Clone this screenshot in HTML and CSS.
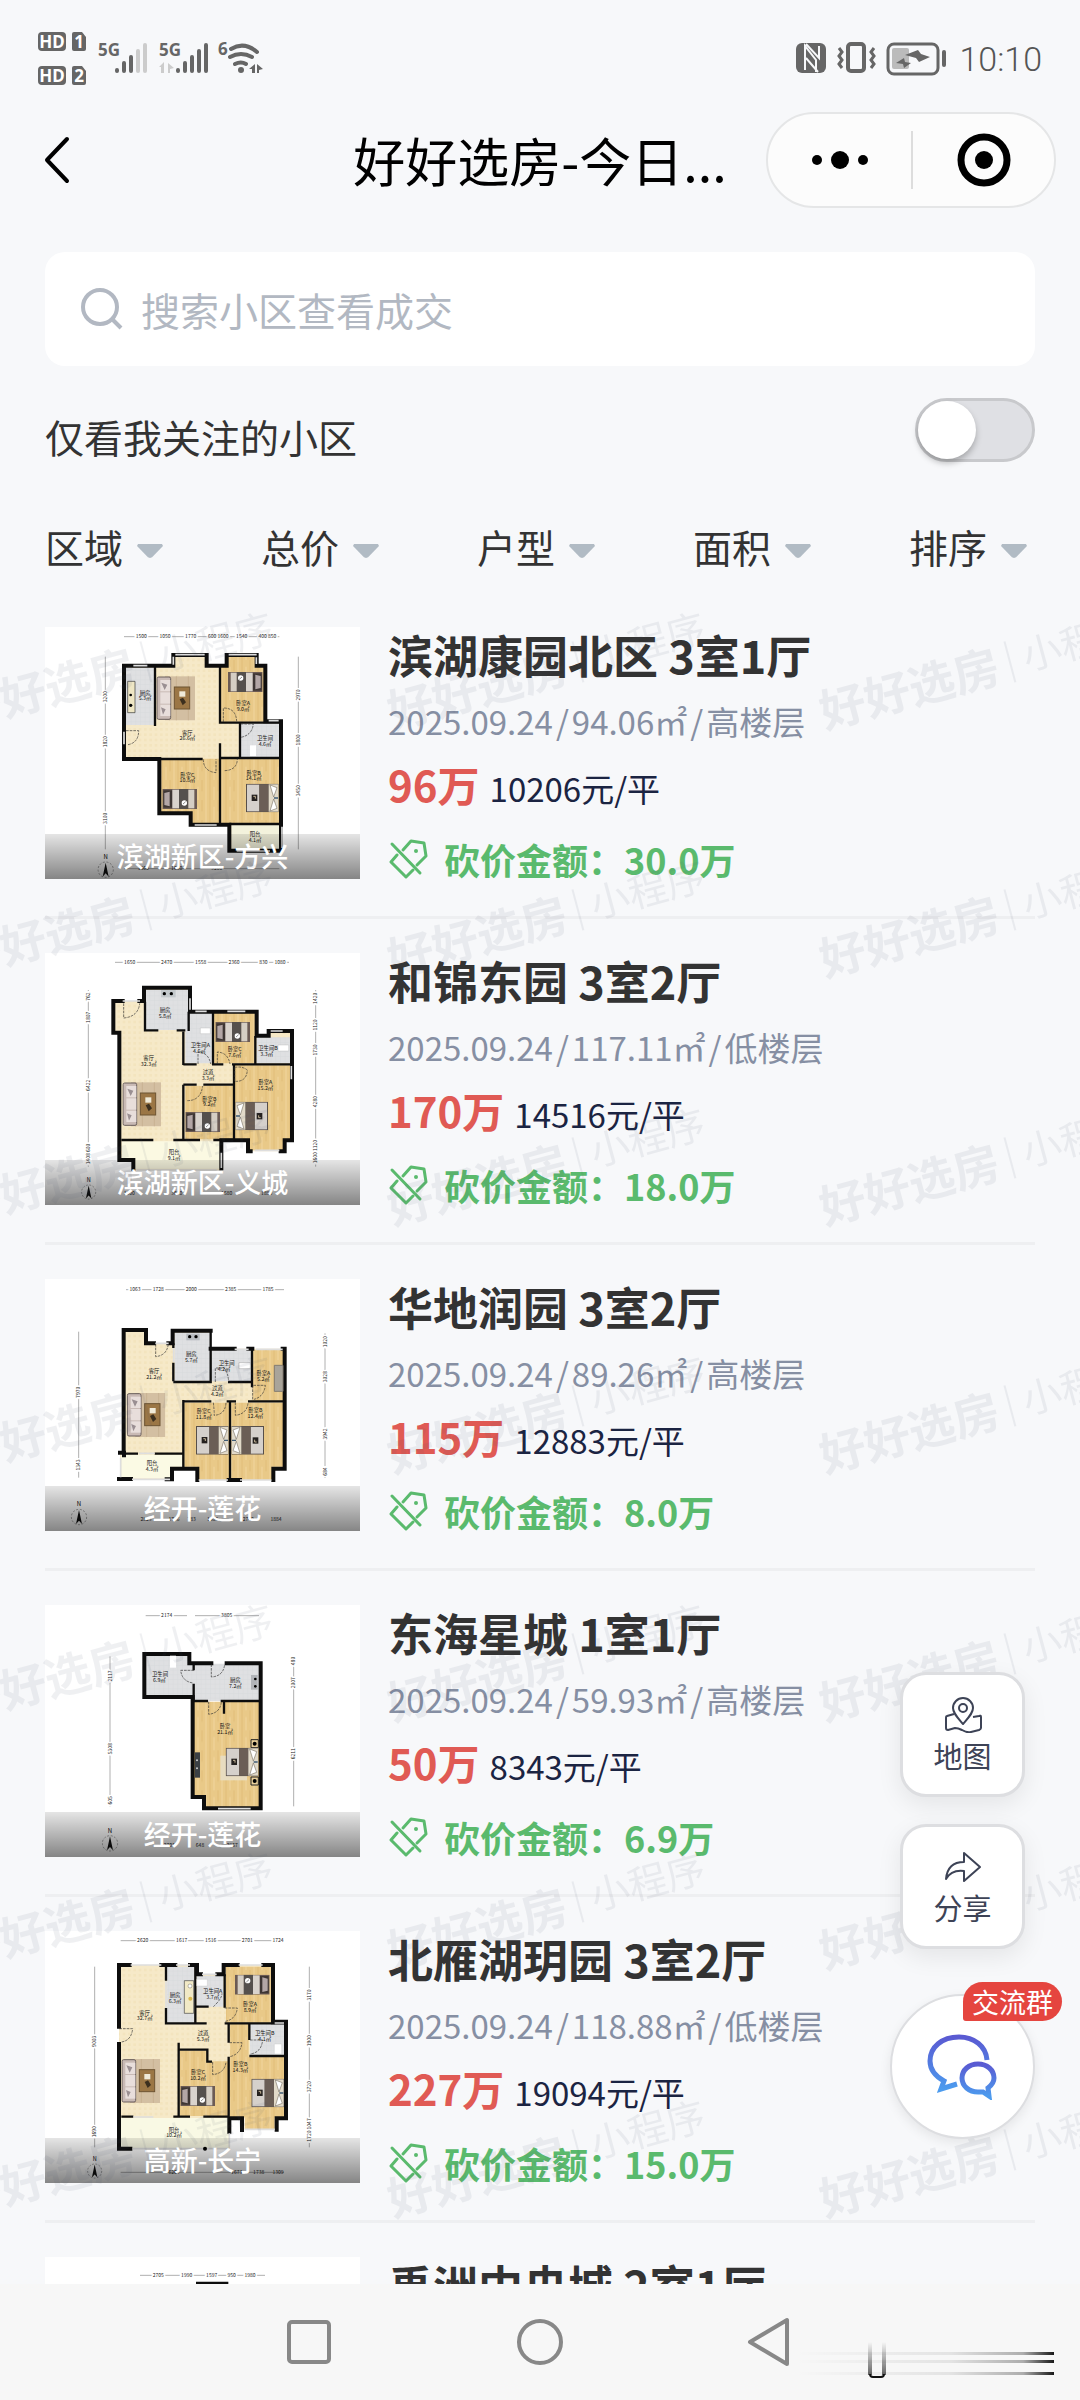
FILE: index.html
```html
<!DOCTYPE html>
<html lang="zh-CN">
<head>
    <meta charset="UTF-8">
    <meta name="viewport" content="width=device-width, initial-scale=1.0">
    <title>好好选房-今日成交</title>
    <link rel="stylesheet" href="styles.css">
</head>
<body>
    <!-- shared symbols for the floor plans and cards -->
    <svg class="sprite" aria-hidden="true">
        <defs>
            <pattern id="wood" width="48" height="60" patternUnits="userSpaceOnUse">
                <rect width="48" height="60" fill="#e9c988"/>
                <path d="M6 0v60M30 0v34" stroke="#e2be79" stroke-width="3"/>
                <path d="M18 20v40M42 0v60" stroke="#efd398" stroke-width="4"/>
            </pattern>
            <pattern id="tile" width="16" height="16" patternUnits="userSpaceOnUse">
                <rect width="16" height="16" fill="#f6e9c8"/>
                <path d="M0 0h8v8H0z" fill="#f3e4be"/>
            </pattern>
            <pattern id="grey" width="14" height="14" patternUnits="userSpaceOnUse">
                <rect width="14" height="14" fill="#dfe0e2"/>
                <path d="M0 0h14M0 0v14" stroke="#d6d8da" stroke-width="2"/>
            </pattern>
            <linearGradient id="chatBlue" x1="0" y1="0" x2="0" y2="1">
                <stop offset="0" stop-color="#5a5ad2"/>
                <stop offset="1" stop-color="#4c9bee"/>
            </linearGradient>
        </defs>
        <symbol id="bed-small" viewBox="0 0 104 60">
            <rect width="104" height="60" fill="#6b5a54"/>
            <rect x="3" y="4" width="27" height="52" fill="#3e3634"/>
            <path d="M6 12l16-4v44l-16-4z" fill="#b3a6a6"/>
            <rect x="30" y="2" width="20" height="56" fill="#d9d3cd"/>
            <rect x="50" width="28" height="60" fill="#55504d"/>
            <rect x="78" y="2" width="18" height="56" fill="#d5cec4"/>
            <circle cx="66" cy="42" r="8" fill="#fff"/>
            <path d="M62 45l8-7" stroke="#555" stroke-width="2"/>
        </symbol>
        <symbol id="bed-large" viewBox="0 0 98 86">
            <rect width="98" height="86" fill="#574f4a"/>
            <rect x="3" y="3" width="37" height="80" fill="#d5d0cb"/>
            <rect x="40" y="2" width="28" height="82" fill="#6b5e56"/>
            <rect x="68" y="2" width="29" height="82" fill="#e2dac9"/>
            <path d="M72 4l21 8-10 28zM72 82l21-8-10-28z" fill="#fff" stroke="#81786d" stroke-width="2"/>
            <rect x="17" y="33" width="17" height="19" fill="#25211f"/>
            <path d="M22 38h6v7" stroke="#c8b899" stroke-width="3" fill="none"/>
            <path d="M84 43h12" stroke="#3f5b75" stroke-width="4"/>
        </symbol>
        <symbol id="sofa" viewBox="0 0 116 134">
            <rect x="26" y="1" width="90" height="132" fill="#d3bfa2"/>
            <path d="M40 1v132M60 1v132M96 1v132" stroke="#c8b293" stroke-width="3"/>
            <rect x="2" y="3" width="41" height="127" rx="5" fill="#c9bab5" stroke="#6a5f5d" stroke-width="3"/>
            <rect x="12" y="12" width="30" height="34" fill="#e8dedb"/>
            <rect x="12" y="49" width="30" height="34" fill="#e8dedb"/>
            <rect x="12" y="86" width="30" height="34" fill="#e8dedb"/>
            <path d="M15 20l18 6-8 16zM14 94l14 6-8 16z" fill="#9a8f92"/>
            <rect x="54" y="33" width="46" height="66" fill="#9b7645" stroke="#6d5433" stroke-width="3"/>
            <rect x="69" y="46" width="18" height="16" fill="#f0ead8"/>
            <path d="M70 70l10-5 9 14-10 9z" fill="#3c2f1e"/>
        </symbol>
        <symbol id="compass" viewBox="0 0 50 76">
            <text x="25" y="17" font-size="18" text-anchor="middle">N</text>
            <circle cx="25" cy="49" r="23" fill="none" stroke="#777" stroke-width="2" stroke-dasharray="6 5"/>
            <path d="M25 28l9 42-9-10-9 10z" fill="#111"/>
        </symbol>
        <symbol id="cut" viewBox="0 0 40 40">
            <g fill="none" stroke="#5aba6d" stroke-width="3" stroke-linejoin="round" stroke-linecap="round">
                <path d="M4 5l28 29"/>
                <path d="M15 11l8-9 13 2 2 13-9 9"/>
                <path d="M9 16l-6 7 15 15 7-7"/>
            </g>
            <circle cx="28" cy="12" r="2" fill="#5aba6d"/>
        </symbol>
    </svg>

    <div class="page">
        <div class="status-bar">
            <svg class="status-left" viewBox="36 28 230 60" aria-hidden="true">
                <g fill="#666">
                    <rect x="38" y="32" width="28" height="19" rx="4"/>
                    <path d="M74 32h8l4 5v12q0 2-2 2H74q-2 0-2-2V34q0-2 2-2z"/>
                    <rect x="38" y="66" width="28" height="19" rx="4"/>
                    <path d="M74 66h8l4 5v12q0 2-2 2H74q-2 0-2-2V68q0-2 2-2z"/>
                </g>
                <g class="narrow" fill="#fff" font-size="17" text-anchor="middle">
                    <text x="52" y="48">HD</text>
                    <text x="79" y="48">1</text>
                    <text x="52" y="82">HD</text>
                    <text x="79" y="82">2</text>
                </g>
                <g class="narrow" fill="#666" font-size="17">
                    <text x="98" y="56">5G</text>
                    <text x="159" y="56">5G</text>
                    <text x="218" y="55">6</text>
                </g>
                <g stroke="#666" stroke-width="4" stroke-linecap="round">
                    <path d="M117 71v-1M124 71v-8M131 71V57M178 71v-1M185 71v-8M192 71V57M199 71V51M206 71V45"/>
                    <path d="M138 71V51M145 71V45" stroke="#ccc"/>
                </g>
                <path d="M159 67l5-5v11h-3v-6zM168 63l6 5-4 1v4h-2z" fill="#ccc"/>
                <g fill="none" stroke="#666" stroke-width="4" stroke-linecap="round">
                    <path d="M231 49q13-8 26 3M230 57q11-6 22 0M235 64q6-3 11 0"/>
                </g>
                <circle cx="241" cy="70" r="3" fill="#666"/>
                <path d="M249 69l6-5v9h-3v-4zM257 64l6 5-4 1v3h-2z" fill="#666"/>
            </svg>
            <div class="status-right">
                <svg class="status-icons" viewBox="794 40 152 36" aria-hidden="true">
                    <rect x="795" y="43" width="30" height="30" rx="6" fill="#666"/>
                    <path d="M804 70V46l11 14v12M805 44l13 14V46M805 58l12 14" fill="none" stroke="#f7f8fa" stroke-width="2"/>
                    <g fill="none" stroke="#666">
                        <rect x="847" y="44" width="16" height="27" rx="3" stroke-width="4"/>
                        <path d="M838 48l3 4-3 4 3 4-3 4 3 4M873 48l-3 4 3 4-3 4 3 4-3 4" stroke-width="3"/>
                        <rect x="887" y="44" width="50" height="30" rx="6" stroke-width="3"/>
                        <path d="M943 52v13" stroke-width="4" stroke-linecap="round"/>
                    </g>
                    <rect x="891" y="48" width="17" height="21" rx="2" fill="#bbb"/>
                    <path d="M904 55l13-5 3 4 9 3-11 5-3-4zM895 63l8-5 1 4 6 1-7 5-1-4z" fill="#666"/>
                </svg>
                <span class="clock">10:10</span>
            </div>
        </div>

        <header class="title-bar">
            <button class="back" aria-label="返回">
                <svg viewBox="0 0 26 48"><path d="M23 3L3 24l20 21" fill="none" stroke="#000" stroke-width="4" stroke-linecap="round" stroke-linejoin="round"/></svg>
            </button>
            <h1>好好选房-今日...</h1>
            <div class="capsule">
                <button aria-label="更多">
                    <svg viewBox="0 0 60 60"><circle cx="7" cy="30" r="5"/><circle cx="30" cy="30" r="9"/><circle cx="53" cy="30" r="5"/></svg>
                </button>
                <button aria-label="关闭">
                    <svg viewBox="0 0 60 60"><circle cx="30" cy="30" r="23" fill="none" stroke="#000" stroke-width="7"/><circle cx="30" cy="30" r="9"/></svg>
                </button>
            </div>
        </header>

        <label class="search-box">
            <svg viewBox="0 0 42 42" aria-hidden="true"><circle cx="19" cy="19" r="17" fill="none" stroke="#b2b8c2" stroke-width="4"/><path d="M31 31l9 9" stroke="#b2b8c2" stroke-width="4"/></svg>
            <input type="text" placeholder="搜索小区查看成交" aria-label="搜索小区">
        </label>

        <div class="follow-row">
            <label for="follow">仅看我关注的小区</label>
            <input class="switch" id="follow" type="checkbox">
        </div>

        <div class="filters">
            <button>区域<i class="caret"></i></button>
            <button>总价<i class="caret"></i></button>
            <button>户型<i class="caret"></i></button>
            <button>面积<i class="caret"></i></button>
            <button>排序<i class="caret"></i></button>
        </div>

        <main class="list">
            <article class="card">
                <div class="plan">
                    <svg viewBox="135 81 945 756" aria-hidden="true">
                        <path d="M372 197h148v-32h100v32h60v-32h90v32h26v167h47v388H688v-78H572v-34h-94V477H372z" fill="url(#tile)"/>
                        <path d="M663 200h135v165H663zM484 476h176v196h-88v-34h-88zM663 476h180v196H663z" fill="url(#wood)"/>
                        <path d="M682 168h88v34h-88z" fill="url(#wood)"/>
                        <path d="M378 203h85v172h-85zM721 370h120v102H721z" fill="url(#grey)"/>
                        <path d="M694 674h148v74H694z" fill="#f3f2dc"/>
                        <path d="M372 197h148v-32h100v32h60v-32h90v32h26v167h47v388H688v-78H572v-34h-94V477H372z" class="wall"/>
                        <path d="M465 200v178M660 200v168h60v104M378 477h230M660 430v242M660 474h180M720 368h120M688 672h150" class="wall-thin"/>
                        <path d="M526 164h88M686 164h84M520 170v24M769 172v20M584 675h66M846 680v64M710 753h100M400 197h42M372 395v38M806 362h30" class="window"/>
                        <path d="M378 392h38q0 36-32 42M670 366v-42q38 0 40 40M722 372h38q-4 34-38 40M610 478q0 36 38 40v-40M674 512q38-2 38-36" class="door"/>
                        <path d="M383 244h22v94h-22z" fill="#eee6c4" stroke="#333" stroke-width="2"/>
                        <circle cx="392" cy="316" r="5"/><circle cx="392" cy="285" r="4"/><path d="M750 436h18v32h-18z" fill="#fff"/>
                        <use href="#sofa" x="469" y="228" width="116" height="134"/>
                        <use href="#bed-small" transform="translate(788 276) rotate(180)" width="104" height="60"/>
                        <use href="#bed-small" x="487" y="567" width="104" height="60"/>
                        <use href="#bed-large" x="738" y="551" width="98" height="86"/>
                        <g class="room">
                            <text x="435" y="284">厨房</text><text x="435" y="301">5.3㎡</text>
                            <text x="562" y="404">客厅</text><text x="562" y="421">26.6㎡</text>
                            <text x="729" y="316">卧室A</text><text x="729" y="333">9.0㎡</text>
                            <text x="795" y="420">卫生间</text><text x="795" y="437">4.6㎡</text>
                            <text x="562" y="530">卧室C</text><text x="562" y="547">10.8㎡</text>
                            <text x="761" y="524">卧室B</text><text x="761" y="541">14.1㎡</text>
                            <text x="765" y="709">阳台</text><text x="765" y="726">4.1㎡</text>
                        </g>
                        <path d="M372 110h466M316 170v578M895 170v578M372 806h466" class="dim"/>
                        <g class="size">
                            <text x="424" y="115">1500</text><text x="495" y="115">1050</text><text x="572" y="115">1770</text><text x="655" y="115">600 1600</text><text x="725" y="115">1540</text><text x="802" y="115">400 850</text>
                            <text transform="translate(321 290) rotate(-90)">3200</text><text transform="translate(321 425) rotate(-90)">1820</text><text transform="translate(321 655) rotate(-90)">3100</text>
                            <text transform="translate(900 285) rotate(-90)">2970</text><text transform="translate(900 420) rotate(-90)">1800</text><text transform="translate(900 572) rotate(-90)">3450</text>
                        </g>
                        <g class="size low">
                            <text x="430" y="811">1860</text><text x="530" y="811">1650</text><text x="650" y="811">3200</text>
                        </g>
                        <use href="#compass" x="292" y="760" width="50" height="76"/>
                    </svg>
                    <span class="area-name">滨湖新区-方兴</span>
                </div>
                <div class="info">
                    <h2>滨湖康园北区 3室1厅</h2>
                    <p class="meta"><span>2025.09.24</span><span>/</span><span>94.06㎡</span><span>/</span><span>高楼层</span></p>
                    <p class="price"><strong>96万</strong><span>10206元/平</span></p>
                    <p class="bargain"><svg><use href="#cut"/></svg><span>砍价金额：30.0万</span></p>
                </div>
            </article>

            <article class="card">
                <div class="plan">
                    <svg viewBox="135 69 945 756" aria-hidden="true">
                        <path d="M340 213h92v-40h138v72h200v72h36v-14h70v328h-20v33H745v-33h-82v90H400v-26h-40V308h-20z" fill="url(#tile)"/>
                        <path d="M438 180h128v120H438zM556 248h80v152h-80zM770 322h104v78H770z" fill="url(#grey)"/>
                        <path d="M642 248h124v152H642zM556 468h144v160H556zM705 406h168v222h-22v32H750v-32h-45z" fill="url(#wood)"/>
                        <path d="M664 637h80v30h-80z" fill="#fff"/>
                        <path d="M366 634h294v82H404v-26h-38z" fill="#fbf9e2"/>
                        <path d="M400 716v-26h-42V308h-18v-95h28M418 213h14v-40h138v72h200v72h36v-14h70v328h-22v33h-12M752 664h-8v-33h-80v84" class="wall"/>
                        <path d="M435 215v86h40M530 301h26M550 305v100M566 245v58M639 248v156M766 318v84M550 403h40M636 403h34M696 403h180M550 464h40M610 464h92v168M550 464v166M364 630h96M520 630h80M640 630h60M702 405v60" class="wall-thin"/>
                        <path d="M368 213h52M682 244h54M586 244h34M764 661h74M664 668v46M874 408v40M812 303h36M410 720h240M570 205v34" class="window"/>
                        <path d="M371 220v44q44-4 48-44M594 402v-36q32 2 38 36M652 402v-36q32 2 38 36M704 412v42q36 2 38-34-16-12-36-8M562 512q40 0 46-44" class="door"/>
                        <path d="M483 180h44v22h-44z" fill="#c3c8cb"/><circle cx="493" cy="191" r="5"/><circle cx="514" cy="191" r="5"/>
                        <path d="M601 294h30v17h-30zM834 345h32v18h-32z" fill="#fff" stroke="#aaa"/>
                        <use href="#sofa" x="367" y="456" width="116" height="134"/>
                        <use href="#bed-small" x="646" y="276" width="104" height="60"/>
                        <use href="#bed-small" x="556" y="546" width="104" height="60"/>
                        <use href="#bed-large" transform="translate(804 601) rotate(180)" width="98" height="86"/>
                        <g class="room">
                            <text x="495" y="247">厨房</text><text x="495" y="264">5.8㎡</text>
                            <text x="446" y="391">客厅</text><text x="446" y="408">32.3㎡</text>
                            <text x="601" y="351">卫生间A</text><text x="598" y="368">4.6㎡</text>
                            <text x="704" y="364">卧室C</text><text x="704" y="381">7.6㎡</text>
                            <text x="804" y="361">卫生间B</text><text x="800" y="378">3.3㎡</text>
                            <text x="624" y="432">过道</text><text x="624" y="449">3.3㎡</text>
                            <text x="628" y="512">卧室B</text><text x="628" y="529">9.2㎡</text>
                            <text x="796" y="463">卧室A</text><text x="796" y="480">15.2㎡</text>
                            <text x="522" y="673">阳台</text><text x="522" y="690">9.1㎡</text>
                        </g>
                        <path d="M345 97h522M265 180v530M947 180v530" class="dim"/>
                        <g class="size">
                            <text x="389" y="102">1650</text><text x="500" y="102">2470</text><text x="602" y="102">1558</text><text x="702" y="102">2360</text><text x="790" y="102">830</text><text x="840" y="102">1080</text>
                            <text transform="translate(270 200) rotate(-90)">762</text><text transform="translate(270 262) rotate(-90)">1807</text><text transform="translate(270 466) rotate(-90)">6422</text><text transform="translate(270 672) rotate(-90)">1408 600</text>
                            <text transform="translate(952 205) rotate(-90)">1420</text><text transform="translate(952 285) rotate(-90)">1120</text><text transform="translate(952 360) rotate(-90)">1730</text><text transform="translate(952 515) rotate(-90)">4280</text><text transform="translate(952 665) rotate(-90)">1600 1120</text>
                        </g>
                        <g class="size low">
                            <text x="388" y="796">1400</text><text x="530" y="796">3680</text><text x="680" y="796">1580</text><text x="800" y="796">1890</text>
                        </g>
                        <use href="#compass" x="241" y="741" width="50" height="70"/>
                    </svg>
                    <span class="area-name">滨湖新区-义城</span>
                </div>
                <div class="info">
                    <h2>和锦东园 3室2厅</h2>
                    <p class="meta"><span>2025.09.24</span><span>/</span><span>117.11㎡</span><span>/</span><span>低楼层</span></p>
                    <p class="price"><strong>170万</strong><span>14516元/平</span></p>
                    <p class="bargain"><svg><use href="#cut"/></svg><span>砍价金额：18.0万</span></p>
                </div>
            </article>

            <article class="card">
                <div class="plan">
                    <svg viewBox="135 57 945 756" aria-hidden="true">
                        <path d="M371 210h67v40h80v-38h114v54h222v360h-34v34H588v-34h-72v30H360v-76h11z" fill="url(#tile)"/>
                        <path d="M524 218h108v144H524zM634 270h120v94H634z" fill="url(#grey)"/>
                        <path d="M758 270h92v152h-92zM553 428h136v232h-98v-40h-38zM694 428h156v192h-34v40H694z" fill="url(#wood)"/>
                        <path d="M364 584h184v36h-36v34H364z" fill="#fbfae4"/>
                        <path d="M371 578V210h67v40h24M505 250h13v-38h114M632 266h72M745 266h12M848 266h6v360h-34v34M592 660v-34h-76v32h-16M393 657h-36M360 578h12v8M686 660h34" class="wall"/>
                        <path d="M632 216v150h-112M520 250v14M520 308v56M756 266v116M684 366h72M550 420v206M550 424h84M680 424h28M744 424h110M690 424v236M372 581h42M464 581h86" class="wall-thin"/>
                        <path d="M466 250h40M704 268h42M768 268h80M362 594v58M396 658h114M596 660h88M720 660h94M521 264v42M416 580h48" class="window"/>
                        <path d="M467 252v38q34-4 38-38M646 366v-42h26q12 12 14 42M640 428q4 34 2 38 34-2 36-38M706 428v38q34-4 38-36M758 418v-42h38q-4 34-34 42" class="door"/>
                        <path d="M559 221h40v20h-40z" fill="#b9bdc2"/><circle cx="569" cy="230" r="5"/><circle cx="588" cy="230" r="5"/>
                        <path d="M717 308h34v18h-34z" fill="#fff" stroke="#777"/>
                        <path d="M823 316h26v78h-26z" fill="#a9a49a" stroke="#827b70" stroke-width="3"/>
                        <use href="#sofa" x="380" y="398" width="116" height="134"/>
                        <use href="#bed-large" x="588" y="498" width="98" height="86"/>
                        <use href="#bed-large" transform="translate(792 584) rotate(180)" width="98" height="86"/>
                        <g class="room">
                            <text x="574" y="289">厨房</text><text x="574" y="306">5.7㎡</text>
                            <text x="462" y="340">客厅</text><text x="462" y="357">21.2㎡</text>
                            <text x="680" y="315">卫生间</text><text x="672" y="332">4.2㎡</text>
                            <text x="790" y="345">卧室A</text><text x="790" y="362">5.2㎡</text>
                            <text x="652" y="391">过道</text><text x="652" y="408">4.2㎡</text>
                            <text x="611" y="459">卧室C</text><text x="611" y="476">11.8㎡</text>
                            <text x="766" y="456">卧室B</text><text x="766" y="473">12.4㎡</text>
                            <text x="456" y="615">阳台</text><text x="456" y="632">4.3㎡</text>
                        </g>
                        <path d="M378 89h474M236 215v438M975 220v434" class="dim"/>
                        <g class="size">
                            <text x="405" y="94">1063</text><text x="475" y="94">1728</text><text x="574" y="94">2000</text><text x="692" y="94">2385</text><text x="804" y="94">1785</text>
                            <text transform="translate(241 397) rotate(-90)">7970</text><text transform="translate(241 615) rotate(-90)">1343</text>
                            <text transform="translate(980 245) rotate(-90)">1020</text><text transform="translate(980 350) rotate(-90)">3028</text><text transform="translate(980 522) rotate(-90)">3942</text><text transform="translate(980 635) rotate(-90)">684</text>
                        </g>
                        <g class="size low">
                            <text x="438" y="782">2823</text><text x="522" y="782">1746</text><text x="575" y="782">783</text><text x="638" y="782">1685</text><text x="745" y="782">2740</text><text x="828" y="782">1884</text>
                        </g>
                        <use href="#compass" x="211" y="722" width="52" height="76"/>
                    </svg>
                    <span class="area-name">经开-莲花</span>
                </div>
                <div class="info">
                    <h2>华地润园 3室2厅</h2>
                    <p class="meta"><span>2025.09.24</span><span>/</span><span>89.26㎡</span><span>/</span><span>高楼层</span></p>
                    <p class="price"><strong>115万</strong><span>12883元/平</span></p>
                    <p class="bargain"><svg><use href="#cut"/></svg><span>砍价金额：8.0万</span></p>
                </div>
            </article>

            <article class="card">
                <div class="plan">
                    <svg viewBox="135 44 945 756" aria-hidden="true">
                        <path d="M432 192h136v28h214v112H578v-10H432z" fill="url(#grey)"/>
                        <path d="M582 334h200v318H612v-34h-30z" fill="url(#wood)"/>
                        <path d="M634 219h-66v-28H433v129h145v300h34v34h170V219H680" class="wall"/>
                        <path d="M581 224v16M581 280v50M580 332h44M662 332h120M672 334v36" class="wall-thin"/>
                        <path d="M654 655h98" class="window"/>
                        <path d="M582 240h-40q4 34 38 38M634 222v38q36-2 40-38M626 334v38q34-4 38-36" class="door"/>
                        <path d="M510 196h18v36h-18z" fill="#fff"/>
                        <path d="M753 254h20v44h-20z" fill="#b1b4b8"/><circle cx="766" cy="266" r="4"/><circle cx="766" cy="288" r="4"/>
                        <path d="M661 496h80v74h-80z" fill="#e8dcc0"/>
                        <path d="M585 486h15v76h-15z" fill="#3b4045"/><circle cx="591" cy="510" r="3" fill="#ccc"/><circle cx="591" cy="534" r="3" fill="#ccc"/>
                        <path d="M753 448h22v24h-22zM753 560h22v24h-22z" fill="#e9cf9a" stroke="#222" stroke-width="3"/>
                        <circle cx="764" cy="460" r="6"/><circle cx="764" cy="572" r="6"/>
                        <use href="#bed-large" x="677" y="472" width="98" height="86"/>
                        <g class="room">
                            <text x="480" y="257">卫生间</text><text x="478" y="274">6.9㎡</text>
                            <text x="706" y="275">厨房</text><text x="706" y="292">7.2㎡</text>
                            <text x="675" y="413">卧室</text><text x="675" y="430">21.1㎡</text>
                        </g>
                        <path d="M437 76h124M585 76h192M330 198v450M881 198v450" class="dim"/>
                        <g class="size">
                            <text x="500" y="81">2174</text><text x="680" y="81">3805</text>
                            <text transform="translate(335 257) rotate(-90)">2117</text><text transform="translate(335 475) rotate(-90)">5308</text><text transform="translate(335 630) rotate(-90)">605</text>
                            <text transform="translate(886 212) rotate(-90)">480</text><text transform="translate(886 277) rotate(-90)">2007</text><text transform="translate(886 490) rotate(-90)">6211</text>
                        </g>
                        <g class="size low">
                            <text x="508" y="770">2703</text><text x="600" y="770">648</text><text x="697" y="770">2957</text>
                        </g>
                        <use href="#compass" x="305" y="710" width="50" height="76"/>
                    </svg>
                    <span class="area-name">经开-莲花</span>
                </div>
                <div class="info">
                    <h2>东海星城 1室1厅</h2>
                    <p class="meta"><span>2025.09.24</span><span>/</span><span>59.93㎡</span><span>/</span><span>高楼层</span></p>
                    <p class="price"><strong>50万</strong><span>8343元/平</span></p>
                    <p class="bargain"><svg><use href="#cut"/></svg><span>砍价金额：6.9万</span></p>
                </div>
            </article>

            <article class="card">
                <div class="plan">
                    <svg viewBox="135 63 945 756" aria-hidden="true">
                        <path d="M357 165h234v28h80v-28h148v170h38v290H690v90H357z" fill="url(#tile)"/>
                        <path d="M501 170h82v168h-82zM590 198h80v92h-80zM750 342h102v94H750z" fill="url(#grey)"/>
                        <path d="M678 170h136v168H678zM540 422h84v32h60v164H540zM690 342h56v98h106v182h-28v36h-90v-36h-44z" fill="url(#wood)"/>
                        <path d="M362 624h324v90H362z" fill="#f9f9e4"/>
                        <path d="M357 350V165h32M357 402v314h34M484 165h42M570 165h21v28h12M652 193h19v-28h42M790 165h29v172M819 335h39v290h-28v34M726 660v-35h-38v40" class="wall"/>
                        <path d="M498 168v44M498 294v46h122M586 168v170M586 290h40M674 193v100M674 340h180M686 340v58M686 440v180M748 340v50M748 438h106M536 398v222M536 419h86v36h14M364 620h36M520 620h50M610 620h78" class="wall-thin"/>
                        <path d="M392 165h92M528 165h42M606 193h44M716 165h72M400 621h60M398 716h290M734 658h90M688 670v42M498 214v80M824 339h28" class="window"/>
                        <circle cx="615" cy="716" r="6"/>
                        <path d="M358 356h40q-4 36-34 40M640 290q26-24 26-40M674 294h38q-4 34-36 40M688 398h38q-4 34-36 42M750 390h38q-4 38-38 42M638 456v38q36-4 40-38" class="door"/>
                        <path d="M553 212h28v98h-28z" fill="#f1e9c6" stroke="#444" stroke-width="2"/><circle cx="570" cy="228" r="6" fill="#fff" stroke="#333"/><circle cx="571" cy="266" r="6" fill="#d9b84e"/>
                        <path d="M590 208h32v20h-32zM823 402h22v30h-22z" fill="#fff" stroke="#bbb"/>
                        <use href="#sofa" x="364" y="446" width="116" height="134"/>
                        <use href="#bed-small" transform="translate(809 254) rotate(180)" width="104" height="60"/>
                        <use href="#bed-small" x="541" y="528" width="104" height="60"/>
                        <use href="#bed-large" x="754" y="506" width="98" height="86"/>
                        <g class="room">
                            <text x="525" y="261">厨房</text><text x="525" y="278">6.3㎡</text>
                            <text x="434" y="314">客厅</text><text x="434" y="331">32.7㎡</text>
                            <text x="638" y="250">卫生间A</text><text x="638" y="267">3.7㎡</text>
                            <text x="750" y="288">卧室A</text><text x="750" y="305">8.9㎡</text>
                            <text x="609" y="376">过道</text><text x="609" y="393">5.3㎡</text>
                            <text x="794" y="376">卫生间B</text><text x="794" y="393">4.1㎡</text>
                            <text x="594" y="493">卧室C</text><text x="594" y="510">10.2㎡</text>
                            <text x="721" y="468">卧室B</text><text x="721" y="485">14.3㎡</text>
                            <text x="522" y="665">阳台</text><text x="522" y="682">10.2㎡</text>
                        </g>
                        <path d="M362 92h490M284 170v542M928 170v542M362 787h490" class="dim"/>
                        <g class="size">
                            <text x="428" y="97">2620</text><text x="545" y="97">1617</text><text x="632" y="97">1516</text><text x="742" y="97">2701</text><text x="834" y="97">1724</text>
                            <text transform="translate(289 394) rotate(-90)">9003</text><text transform="translate(289 665) rotate(-90)">1690</text>
                            <text transform="translate(933 255) rotate(-90)">3170</text><text transform="translate(933 392) rotate(-90)">1900</text><text transform="translate(933 530) rotate(-90)">3720</text><text transform="translate(933 660) rotate(-90)">1720 1047</text>
                        </g>
                        <g class="size low">
                            <text x="522" y="792">6204</text><text x="710" y="792">1673</text><text x="776" y="792">1738</text><text x="834" y="792">1309</text>
                        </g>
                        <use href="#compass" x="259" y="738" width="50" height="70"/>
                    </svg>
                    <span class="area-name">高新-长宁</span>
                </div>
                <div class="info">
                    <h2>北雁湖玥园 3室2厅</h2>
                    <p class="meta"><span>2025.09.24</span><span>/</span><span>118.88㎡</span><span>/</span><span>低楼层</span></p>
                    <p class="price"><strong>227万</strong><span>19094元/平</span></p>
                    <p class="bargain"><svg><use href="#cut"/></svg><span>砍价金额：15.0万</span></p>
                </div>
            </article>

            <article class="card">
                <div class="plan">
                    <svg viewBox="0 0 945 756" aria-hidden="true">
                        <path d="M285 55h375" class="dim"/>
                        <g class="size">
                            <text x="340" y="60">2705</text><text x="425" y="60">1990</text><text x="500" y="60">1597</text><text x="560" y="60">950</text><text x="615" y="60">1980</text>
                        </g>
                        <path d="M459 80h85v240h-85z" fill="url(#tile)" class="wall"/>
                    </svg>
                </div>
                <div class="info">
                    <h2>禹洲中央城 2室1厅</h2>
                </div>
            </article>

            <svg class="watermark" aria-hidden="true">
                <defs>
                    <pattern id="mark" x="-57" y="2" width="432" height="248" patternUnits="userSpaceOnUse">
                        <g transform="translate(18 134) rotate(-15)" fill="#46506a">
                            <text font-size="46" font-weight="700">好好选房</text>
                            <text x="210" y="-4" font-size="39">小程序</text>
                            <path d="M196 -38v42" stroke="#46506a" stroke-width="2"/>
                        </g>
                    </pattern>
                </defs>
                <rect width="100%" height="100%" fill="url(#mark)"/>
            </svg>

            <div class="float-menu">
                <button class="float-btn">
                    <svg viewBox="0 0 40 36" aria-hidden="true">
                        <g fill="none" stroke="#3d4356" stroke-width="2" stroke-linejoin="round">
                            <path d="M20 27c-6-7-10-11-10-16a10 10 0 0 1 20 0c0 5-4 9-10 16z"/>
                            <circle cx="20" cy="11" r="4"/>
                            <path d="M11 17l-7 2q-1 0-1 2v10q0 2 2 2l7-2q3 0 7 2 5 3 9 2l8-2q2-1 2-2V20q0-2-2-1l-6 1"/>
                        </g>
                    </svg>
                    地图
                </button>
                <button class="float-btn">
                    <svg viewBox="0 0 40 36" aria-hidden="true"><path d="M21 4l16 14-16 14V22C13 21 7 23 3 30 4 19 10 13 21 13z" fill="none" stroke="#3d4356" stroke-width="2" stroke-linejoin="round"/></svg>
                    分享
                </button>
                <button class="chat-btn" aria-label="交流群">
                    <svg viewBox="0 0 72 66" aria-hidden="true">
                        <g fill="none" stroke="url(#chatBlue)" stroke-width="5">
                            <path d="M60 26C59 12 47 3 32 3 15 3 3 13 3 27c0 9 5 15 14 20l-3 8 16-5"/>
                            <path d="M51 30c-9 0-16 6-16 14s7 14 16 14h5l6 4-1-8c4-3 6-6 6-10 0-8-7-14-16-14z"/>
                        </g>
                    </svg>
                    <span class="badge">交流群</span>
                </button>
            </div>
        </main>

        <nav class="system-nav">
            <button aria-label="最近任务"><svg viewBox="0 0 50 50"><rect x="5" y="5" width="40" height="40" rx="3"/></svg></button>
            <button aria-label="主页"><svg viewBox="0 0 50 50"><circle cx="25" cy="25" r="21"/></svg></button>
            <button aria-label="后退"><svg viewBox="0 0 50 50"><path d="M41 3v44L4 25z"/></svg></button>
            <svg class="smear" viewBox="0 0 260 44" aria-hidden="true">
                <defs>
                    <linearGradient id="fadeX"><stop offset="0" stop-color="#000" stop-opacity="0"/><stop offset=".6" stop-color="#000" stop-opacity=".08"/><stop offset=".88" stop-color="#000" stop-opacity=".3"/><stop offset="1" stop-color="#000" stop-opacity=".9"/></linearGradient>
                    <linearGradient id="fadeY" x1="0" y1="0" x2="0" y2="1"><stop offset="0" stop-color="#000" stop-opacity="0"/><stop offset="1" stop-color="#000" stop-opacity=".6"/></linearGradient>
                </defs>
                <path d="M0 12h258v3H0zM0 20h258v3H0zM0 32h258v3H0z" fill="url(#fadeX)"/>
                <path d="M72 2h4v33h-4zM86 2h4v33h-4z" fill="url(#fadeY)"/>
                <path d="M74 34q0 3 3 3h8q3 0 3-3" fill="none" stroke="#111" stroke-width="2"/>
            </svg>
        </nav>
    </div>
</body>
</html>
```
FILE: styles.css
```css
* {
    box-sizing: border-box;
}

body {
    margin: 0;
    background-color: #f7f8fa;
    color: #333;
    font-family: "Noto Sans CJK SC", sans-serif;
}

h1, h2, p {
    margin: 0;
}

button {
    background: none;
    border: none;
    padding: 0;
    color: inherit;
    font-family: inherit;
    cursor: pointer;
}

svg {
    display: block;
}

.sprite {
    position: absolute;
    width: 0;
    height: 0;
}

.page {
    display: flex;
    flex-direction: column;
    height: 100vh;
    overflow: hidden;
}

/* phone status bar */
.status-bar {
    display: flex;
    justify-content: space-between;
    align-items: center;
    padding: 28px 38px 0 36px;
    height: 88px;
    flex-shrink: 0;
}

.status-left {
    width: 230px;
    height: 60px;
}

.status-right {
    display: flex;
    align-items: center;
    gap: 12px;
}

.status-icons {
    width: 152px;
    height: 36px;
}

.clock {
    padding-top: 2px;
    font-family: Roboto, sans-serif;
    font-size: 34px;
    font-weight: 300;
    line-height: 36px;
    color: #555;
}

.narrow {
    font-family: "Liberation Sans Narrow", "Noto Sans", sans-serif;
    font-weight: 700;
}

/* title bar */
.title-bar {
    display: grid;
    grid-template-columns: 290px 1fr 290px;
    align-items: center;
    padding: 24px 24px 0;
    flex-shrink: 0;
}

.title-bar h1 {
    font-size: 52px;
    line-height: 60px;
    font-weight: 400;
    color: #000;
    text-align: center;
    white-space: nowrap;
}

.back {
    justify-self: start;
    padding: 0 20px;
}

.back svg {
    width: 26px;
    height: 48px;
}

.capsule {
    display: grid;
    grid-template-columns: 1fr 1fr;
    height: 96px;
    border: 2px solid #e5e6e7;
    border-radius: 48px;
    background-color: #fcfcfc;
    align-items: center;
}

.capsule button {
    display: flex;
    justify-content: center;
    height: 58px;
    align-items: center;
}

.capsule button + button {
    border-left: 2px solid #ddd;
}

.capsule svg {
    width: 60px;
    height: 60px;
}

/* search */
.search-box {
    display: flex;
    align-items: center;
    gap: 18px;
    margin: 44px 45px 0;
    padding: 0 36px;
    height: 114px;
    border-radius: 20px;
    background-color: #fff;
    flex-shrink: 0;
}

.search-box svg {
    width: 42px;
    height: 42px;
    flex-shrink: 0;
}

.search-box input {
    flex: 1;
    min-width: 0;
    padding: 0;
    border: none;
    outline: none;
    background: none;
    font-family: inherit;
    font-size: 39px;
    line-height: 56px;
}

.search-box input::placeholder {
    color: #b2b8c2;
    opacity: 1;
}

.follow-row {
    display: flex;
    justify-content: space-between;
    align-items: flex-start;
    margin: 32px 45px 0;
    flex-shrink: 0;
}

.follow-row label {
    padding-top: 8px;
    font-size: 39px;
    line-height: 60px;
}

.switch {
    appearance: none;
    margin: 0;
    width: 120px;
    height: 64px;
    border: 3px solid #c8c9cc;
    border-radius: 32px;
    background-color: #dfe0e4;
}

.switch::before {
    content: "";
    display: block;
    width: 58px;
    height: 58px;
    border-radius: 50%;
    background-color: #fff;
    box-shadow: 0 4px 6px rgba(0, 0, 0, 0.25);
}

.switch:checked {
    background-color: #5aba6d;
}

.switch:checked::before {
    margin-left: auto;
}

.filters {
    display: grid;
    grid-template-columns: repeat(5, 1fr);
    margin-top: 50px;
    flex-shrink: 0;
}

.filters button {
    display: flex;
    justify-content: center;
    align-items: center;
    padding-right: 8px;
    gap: 14px;
    font-size: 39px;
    line-height: 60px;
}

.caret {
    width: 26px;
    height: 14px;
    margin-top: 10px;
    background-color: #b1bbc4;
    clip-path: polygon(4% 0, 96% 0, 100% 14%, 58% 94%, 50% 100%, 42% 94%, 0 14%);
}

/* deals list */
.list {
    position: relative;
    flex: 1;
    min-height: 0;
    margin-top: 17px;
    overflow: hidden;
}

.card {
    display: flex;
    gap: 28px;
    margin: 0 45px;
    padding: 34px 0 37px;
    border-bottom: 3px solid #eeeff1;
}

.plan {
    position: relative;
    width: 315px;
    height: 252px;
    background-color: #fff;
    flex-shrink: 0;
}

.plan svg {
    width: 315px;
    height: 252px;
}

.area-name {
    position: absolute;
    left: 0;
    right: 0;
    bottom: 0;
    height: 45px;
    background: linear-gradient(rgba(0, 0, 0, 0.1), rgba(0, 0, 0, 0.48));
    color: #fff;
    font-size: 27px;
    line-height: 44px;
    font-weight: 500;
    text-align: center;
}

.wall {
    stroke: #0d0d0d;
    stroke-width: 12;
    stroke-linecap: square;
}

.wall:not([fill]) {
    fill: none;
}

.wall-thin {
    fill: none;
    stroke: #0d0d0d;
    stroke-width: 7;
}

.window {
    fill: none;
    stroke: #dedede;
    stroke-width: 5;
}

.door {
    fill: none;
    stroke: #333;
    stroke-width: 2;
    stroke-dasharray: 8 3;
}

.dim {
    stroke: #888;
    stroke-width: 2;
}

.room text {
    font-size: 16px;
    fill: #111;
    text-anchor: middle;
}

.size text {
    font-size: 15px;
    fill: #222;
    stroke: #fff;
    stroke-width: 10;
    paint-order: stroke;
    text-anchor: middle;
}

.size.low text {
    stroke: none;
}

.info {
    flex: 1;
    min-width: 0;
}

.info h2 {
    font-size: 45px;
    line-height: 56px;
    font-weight: 700;
    white-space: nowrap;
}

.meta {
    display: flex;
    gap: 3px;
    margin-top: 15px;
    font-size: 33px;
    line-height: 46px;
    color: #868fa3;
}

.price {
    display: flex;
    align-items: baseline;
    gap: 10px;
    height: 50px;
    margin-top: 15px;
    line-height: 50px;
}

.price strong {
    font-size: 42px;
    color: #e05a54;
}

.price span {
    font-size: 33px;
    color: #1b2442;
}

.bargain {
    display: flex;
    align-items: center;
    gap: 16px;
    height: 36px;
    margin-top: 32px;
    font-size: 36px;
    line-height: 36px;
    font-weight: 700;
    color: #5aba6d;
}

.bargain svg {
    width: 40px;
    height: 40px;
}

.watermark {
    position: absolute;
    top: 0;
    left: 0;
    width: 100%;
    height: 100%;
    opacity: 0.08;
    pointer-events: none;
}

/* floating buttons */
.float-menu {
    position: absolute;
    right: 45px;
    bottom: 145px;
    display: flex;
    flex-direction: column;
    align-items: center;
    gap: 27px;
}

.float-btn {
    display: flex;
    flex-direction: column;
    align-items: center;
    width: 125px;
    height: 125px;
    padding-top: 22px;
    border: 3px solid #dddee1;
    border-radius: 26px;
    background-color: #fff;
    box-shadow: 0 8px 24px rgba(0, 0, 0, 0.08);
    font-size: 29px;
    line-height: 44px;
    color: #3d4356;
}

.float-btn svg {
    width: 40px;
    height: 36px;
}

.chat-btn {
    position: relative;
    display: flex;
    justify-content: center;
    align-items: center;
    width: 145px;
    height: 145px;
    margin-top: 18px;
    border: 2px solid #dddee1;
    border-radius: 50%;
    background-color: #fff;
    box-shadow: 0 4px 12px rgba(0, 0, 0, 0.08);
}

.chat-btn svg {
    width: 72px;
    height: 66px;
}

.badge {
    position: absolute;
    top: -14px;
    right: -29px;
    padding: 0 9px;
    border-radius: 20px 20px 20px 3px;
    background-color: #e5453f;
    color: #fff;
    font-size: 27px;
    line-height: 39px;
    white-space: nowrap;
}

/* system navigation */
.system-nav {
    position: relative;
    display: flex;
    justify-content: center;
    align-items: center;
    gap: 181px;
    height: 116px;
    background-color: #f7f7f7;
    flex-shrink: 0;
}

.system-nav button svg {
    width: 50px;
    height: 50px;
    fill: none;
    stroke: #888;
    stroke-width: 4;
    stroke-linejoin: round;
}

.smear {
    position: absolute;
    right: 24px;
    bottom: 16px;
    width: 260px;
    height: 44px;
}
```
